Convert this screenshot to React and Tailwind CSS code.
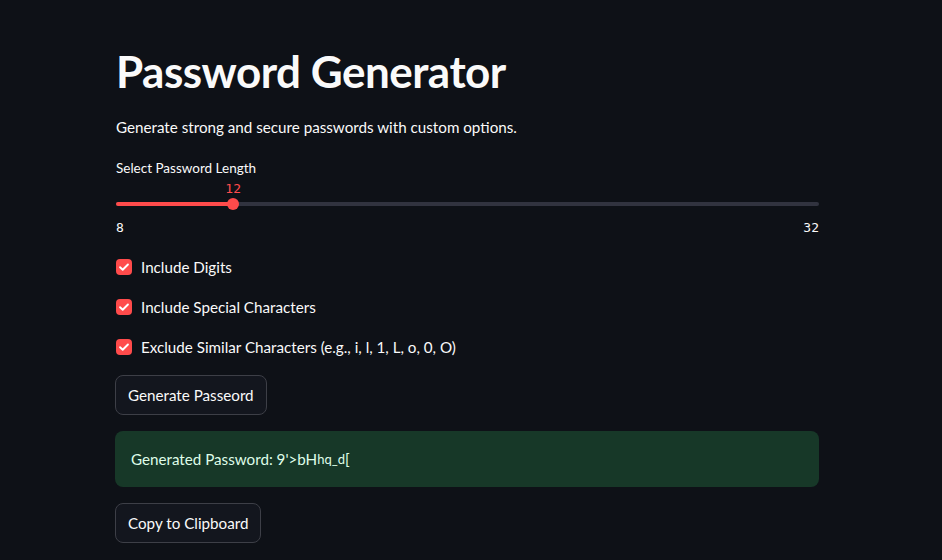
import React from "react";

const Check = () => (
  <span className="flex h-4 w-4 items-center justify-center rounded-[4px] bg-[#ff4b4b]">
    <svg viewBox="0 0 16 16" className="h-3.5 w-3.5" fill="none">
      <path d="M3.5 8.3l3 2.8 6-6" stroke="#fff" strokeWidth="2.2" strokeLinecap="round" strokeLinejoin="round" />
    </svg>
  </span>
);

const Option = ({ label }) => (
  <label className="flex h-6 items-center gap-[9px] text-[15.2px] text-[#fafafa]">
    <Check />
    <span>{label}</span>
  </label>
);

const App = () => {
  const min = 8;
  const max = 32;
  const value = 12;
  const pct = ((value - min) / (max - min)) * 100;

  return (
    <div className="min-h-[560px] w-full bg-[#0e1117] font-['Lato','Noto_Sans',sans-serif] text-[#fafafa]">
      <div className="ml-[116px] w-[703px] pt-[39px]">
        <h1 className="text-[44px] font-bold leading-[64px] tracking-[-0.5px]">Password Generator</h1>
        <p className="mt-[12px] text-[15.2px] leading-6">Generate strong and secure passwords with custom options.</p>

        <div className="mt-[19px] text-[13.5px] leading-5">Select Password Length</div>

        <div className="relative mt-[4px] h-[48px]">
          <div className="absolute left-0 right-0 top-[20px] h-1 rounded-full bg-[#31333f]" />
          <div
            className="absolute left-0 top-[20px] h-1 rounded-full bg-[#ff4b4b]"
            style={{ width: `${pct}%` }}
          />
          <div
            className="absolute top-[16px] h-3 w-3 -translate-x-1/2 rounded-full bg-[#ff4b4b]"
            style={{ left: `${pct}%` }}
          />
          <div
            className="absolute top-[-3px] -translate-x-1/2 font-['DejaVu_Sans_Mono',monospace] text-[13px] text-[#ff4b4b]"
            style={{ left: `${pct}%` }}
          >
            {value}
          </div>
          <div className="absolute left-0 right-0 top-[36px] flex justify-between font-['DejaVu_Sans_Mono',monospace] text-[13px]">
            <span>{min}</span>
            <span>{max}</span>
          </div>
        </div>

        <div className="mt-[25px] flex flex-col gap-4">
          <Option label="Include Digits" />
          <Option label="Include Special Characters" />
          <Option label="Exclude Similar Characters (e.g., i, l, 1, L, o, 0, O)" />
        </div>

        <button className="mt-[16px] -ml-px h-[40px] rounded-lg border border-[#3d3f47] bg-[#13161e] px-3 text-[15.2px] text-[#fafafa]">
          Generate Passeord
        </button>

        <div className="mt-[16px] -ml-px flex h-[56px] items-center rounded-lg bg-[#173828] px-4 text-[15.2px] text-[#dffde9]">
          Generated Password: 9'&gt;bH<span className="text-[13px] leading-none">hq_d</span>[
        </div>

        <button className="mt-[16px] -ml-px h-[40px] rounded-lg border border-[#3d3f47] bg-[#13161e] px-3 text-[15.2px] text-[#fafafa]">
          Copy to Clipboard
        </button>
      </div>
    </div>
  );
};

export default App;
